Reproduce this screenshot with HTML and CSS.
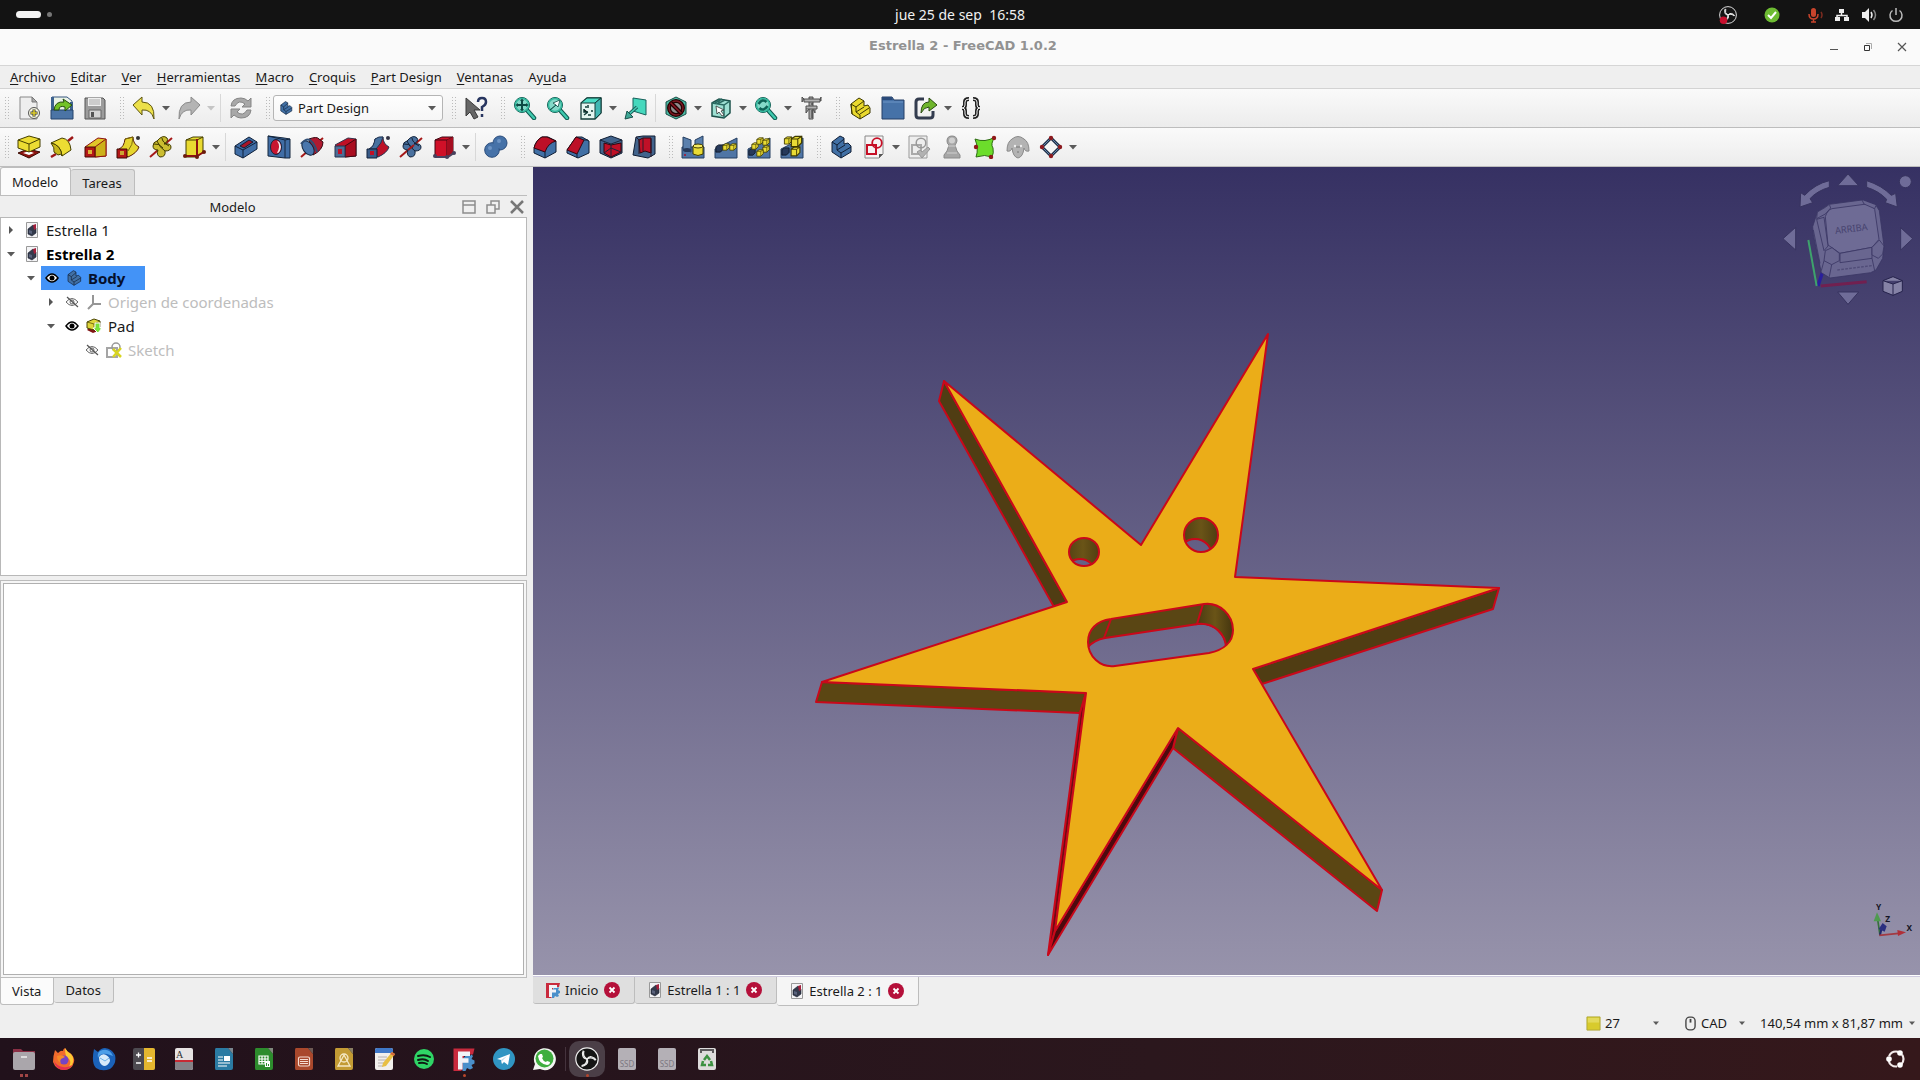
FILE: index.html
```html
<!DOCTYPE html>
<html lang="es">
<head>
    <meta charset="UTF-8">
    <meta name="viewport" content="width=device-width, initial-scale=1.0">
    <title>Estrella 2 - FreeCAD 1.0.2</title>
    <link rel="stylesheet" href="styles.css">
</head>
<body>
    <!-- Icon sprite -->
    <svg class="sprite" aria-hidden="true">
        <symbol id="arrow" viewBox="0 0 8 8"><path d="M0 2h8L4 6.500z" fill="#5a5a5a"/></symbol>
        <symbol id="tri" viewBox="0 0 8 8"><path d="M2 0v8l4-4z" fill="#555"/></symbol>

        <symbol id="new" viewBox="0 0 24 24"><path d="M3 1h12l5 5v17H3z" fill="#eee" stroke="#888"/><path d="M15 1v5h5z" fill="#aaa" stroke="#777"/><circle cx="17" cy="17" r="5.500" fill="#f4f4e0" stroke="#555"/><path d="M17 13.500v7M13.500 17h7" stroke="#333" stroke-width="3"/><path d="M17 14v6M14 17h6" stroke="#e0d030" stroke-width="1.500"/></symbol>
        <symbol id="open" viewBox="0 0 24 24"><path d="M2 1h15l5 4v14H2z" fill="#eaf2e6" stroke="#34557f"/><path d="M1 1h3v13h16V6h3v17H1z" fill="#3d628f"/><path d="M1 14h22v9H1z" fill="#4b74a5" stroke="#24426a"/><path d="M4 14q1-9 10-8l-1-3 9 6-7 6v-4q-6-2-6 3z" fill="#73c226" stroke="#254c10"/></symbol>
        <symbol id="save" viewBox="0 0 24 24"><path d="M2 2h18l2 2v19H2z" fill="#9c9c9c" stroke="#555"/><path d="M5 2h13v8H5z" fill="#eee"/><path d="M6 4h11M6 6h11M6 8h11" stroke="#aaa"/><path d="M6 14h12v8H6z" fill="#d5d5d5" stroke="#666"/><path d="M8 16h3v5H8z" fill="#555"/></symbol>
        <symbol id="undo" viewBox="0 0 24 24"><path d="M1 9l9-8v5q13 0 12 17-3-10-12-9v5z" fill="#ece04a" stroke="#5c5410" stroke-linejoin="round"/></symbol>
        <symbol id="redo" viewBox="0 0 24 24"><path d="M23 9l-9-8v5Q1 6 2 23q3-10 12-9v5z" fill="#b4b4b4" stroke="#8b8b8b" stroke-linejoin="round"/></symbol>
        <symbol id="refresh" viewBox="0 0 24 24"><path d="M2 10q1-8 10-8 4 0 7 3l3-3v9h-9l3-3q-6-5-10 2z" fill="#a8a8a8" stroke="#858585"/><path d="M22 14q-1 8-10 8-4 0-7-3l-3 3v-9h9l-3 3q6 5 10-2z" fill="#a8a8a8" stroke="#858585"/></symbol>
        <symbol id="whats" viewBox="0 0 24 24"><path d="M2 2v18l4-4 4 7 4-2-4-7h6z" fill="#666" stroke="#3a3a3a"/><path d="M14 6q0-4 4-4 4 0 4 4 0 3-4 5v4M18 18v3" fill="none" stroke="#283660" stroke-width="2.500"/></symbol>

        <symbol id="lens" viewBox="0 0 24 24"><path d="M13 13l8 9" stroke="#0d5a50" stroke-width="4.500" stroke-linecap="round"/><path d="M13 13l8 9" stroke="#3fc9ae" stroke-width="2.500" stroke-linecap="round"/><circle cx="9" cy="9" r="7.500" fill="#84d9c8" stroke="#0d5a50"/><circle cx="9" cy="9" r="6.500" fill="none" stroke="#35b89e" stroke-width="1.500"/></symbol>
        <symbol id="fitall" viewBox="0 0 24 24"><use href="#lens"/><path d="M9 4v10M4 9h10" stroke="#0e4a44" stroke-width="2"/><path d="M9 2.500l2 2.500H7zM9 15.500L7 13h4zM2.500 9L5 7v4zM15.500 9L13 11V7z" fill="#0e4a44"/></symbol>
        <symbol id="fitsel" viewBox="0 0 24 24"><use href="#lens"/><path d="M4 14l6-5-3-2 7-3-2 7-2-2z" fill="#fff" stroke="#0e4a44" stroke-width=".8"/></symbol>
        <symbol id="isocube" viewBox="0 0 24 24"><path d="M2 7l6-5h14v15l-6 6H2z" fill="#e4f5f0" stroke="#123c38" stroke-width="1.300"/><path d="M2 7l6-5h14l-6 5z" fill="#4bdcc4" stroke="#123c38"/><path d="M16 7l6-5v15l-6 6z" fill="#42b7b3" stroke="#123c38"/><path d="M5 19l4-3M9 9v3M5 13v3h4M9 19h3M12 15h2M7 10v2" stroke="#123c38" stroke-width="1.500"/></symbol>
        <symbol id="goto" viewBox="0 0 24 24"><path d="M9 2l13 2v15L9 15z" fill="#45d8bd" stroke="#17605a"/><path d="M13 11l-9 8" stroke="#17605a" stroke-width="3.500"/><path d="M13 11l-9 8" stroke="#49cdb6" stroke-width="1.500"/><path d="M1 23l2-8 6 6z" fill="#3ea795" stroke="#17504a"/></symbol>
        <symbol id="drawstyle" viewBox="0 0 24 24"><path d="M12 1l10 5v12l-10 5-10-5V6z" fill="#4bb9a3" stroke="#174c45"/><circle cx="12" cy="12" r="7" fill="#8d8d8d" stroke="#200" stroke-width="4"/><circle cx="12" cy="12" r="7" fill="none" stroke="#7d1822" stroke-width="1.500"/><path d="M7 7l10 10" stroke="#200" stroke-width="4"/><path d="M7 7l10 10" stroke="#8d1522" stroke-width="1.500"/></symbol>
        <symbol id="bbox" viewBox="0 0 24 24"><path d="M3 7l7-4 11 2v12l-6 5-12-2z" fill="#9ee0d3" stroke="#1c514b" stroke-width="1.500"/><path d="M3 7l12 2 6-4M15 9v13M10 3v4M6 7l7-4M8 8l8-4" fill="none" stroke="#2a6a62" stroke-width="1.500"/><path d="M7 10l8 4-3 1 3 4-2 1-3-4-2 2z" fill="#fff" stroke="#333" stroke-width=".8"/></symbol>
        <symbol id="sync" viewBox="0 0 24 24"><use href="#lens"/><path d="M4.500 8q4-6 8-2M13.500 10q-4 6-8 2" fill="none" stroke="#0e6356" stroke-width="2.500"/></symbol>
        <symbol id="caliper" viewBox="0 0 24 24"><path d="M10 1h4v22h-4z" fill="#a5a5a5" stroke="#4e4e4e"/><path d="M5 3h16v3H5zM7 10h11v3H7z" fill="#b3b3b3" stroke="#4e4e4e"/><path d="M5 3L3 1v5zM21 4l1-3v4zM7 13v4l3-4M16 13v4l-2-4" fill="#999" stroke="#4e4e4e"/><path d="M12 8h2M12 15h2M12 17h2M12 19h2M12 21h2" stroke="#333"/></symbol>
        <symbol id="part" viewBox="0 0 24 24"><path d="M3 8l8-6 5 3v5l4-1 2 3v5l-10 6-8-5z" fill="#e9d92e" stroke="#3c3700" stroke-linejoin="round"/><path d="M3 8l5 3v5l4 3v4M8 11l8-6M8 16l8-5M12 18l9-6M3 8l1 10" fill="none" stroke="#3c3700"/></symbol>
        <symbol id="folder" viewBox="0 0 24 24"><path d="M1 4V1h10l2 3h10v19H1z" fill="#4672a8" stroke="#243f66"/><path d="M1 1h9l2 3H1z" fill="#2b4b7a"/><path d="M2 6h20" stroke="#6d95c6"/></symbol>
        <symbol id="link" viewBox="0 0 24 24"><path d="M10 3H5q-3 0-3 3v13q0 3 3 3h11q3 0 3-3v-4" fill="none" stroke="#333c4f" stroke-width="3"/><path d="M7 17Q7 6 15 6V2l8 7-8 6v-4q-5 0-8 6z" fill="#6eb52b" stroke="#2a4d12"/></symbol>
        <symbol id="braces" viewBox="0 0 24 24"><path d="M10 3Q6 3 6 6v3q0 3-3 3 3 0 3 3v3q0 3 4 3M14 3q4 0 4 3v3q0 3 3 3-3 0-3 3v3q0 3-4 3" fill="none" stroke="#222" stroke-width="4"/><path d="M10 3Q6 3 6 6v3q0 3-3 3 3 0 3 3v3q0 3 4 3M14 3q4 0 4 3v3q0 3 3 3-3 0-3 3v3q0 3-4 3" fill="none" stroke="#eee" stroke-width="1"/></symbol>

        <symbol id="pad" viewBox="0 0 24 24"><path d="M1 18l10-4 12 3-11 6z" fill="#8e1410" stroke="#3a0a00"/><path d="M6 18l6-2 5 2-5 2z" fill="#fff"/><path d="M1 5l11-4 11 3v8l-11 5-11-4z" fill="#ecdc33" stroke="#453f00" stroke-linejoin="round"/><path d="M1 5l11 4 11-5M12 9v8" fill="none" stroke="#453f00"/></symbol>
        <symbol id="revolve" viewBox="0 0 24 24"><path d="M1 22l5-3M18 6l5-4" stroke="#9d1717" stroke-width="2.500"/><path d="M1 8l11-5q8 1 9 12l-9 6Q11 10 1 8z" fill="#ecdc33" stroke="#453f00"/><path d="M1 8q4 5 3 9l4 3q5-2 4 1Q11 10 1 8z" fill="#c7b71b" stroke="#453f00"/></symbol>
        <symbol id="loft" viewBox="0 0 24 24"><path d="M2 12L15 3l8 1v17l-11 1z" fill="#e1c529" stroke="#8d1111"/><path d="M12 12l11-8v17l-11 1z" fill="#cdb11a" stroke="#8d1111"/><path d="M2 12h10v10H2z" fill="#b31717" stroke="#480a05"/><path d="M5 15h4v4H5z" fill="#ddb23b"/></symbol>
        <symbol id="pipe" viewBox="0 0 24 24"><path d="M3 14Q8 12 9 4l8-2q0 7 6 10-2 6-11 10z" fill="#e5d52e" stroke="#591f05"/><path d="M9 4l8-2q0 8-5 14" fill="none" stroke="#7c6c0c"/><path d="M1 14h10v9H1z" fill="#b31717" stroke="#3a0a05"/><path d="M4 16h4v4H4z" fill="#cba632"/><circle cx="22" cy="3" r="2" fill="#333"/></symbol>
        <symbol id="helix" viewBox="0 0 24 24"><path d="M1 22L23 3" stroke="#a51818" stroke-width="2"/><path d="M8 6Q14-1 18 3q2 3-3 6 7-1 7 3 0 4-6 4 1 6-5 6-4-2-2-7-5 0-5-4 0-4 4-5z" fill="#cbbd30" stroke="#403a00"/><path d="M8 6q2 6 8 10M13 3q0 4 7 8M5 9q5-1 9 4" fill="none" stroke="#403a00"/></symbol>
        <symbol id="addbox" viewBox="0 0 24 24"><path d="M4 5l7-3h10v15l-6 5H4z" fill="#e9da31" stroke="#453f00"/><path d="M4 5h11l6-3M15 5v17" fill="none" stroke="#453f00"/><path d="M15 4v17M3 21h12l7-4" fill="none" stroke="#8c1111" stroke-width="2"/><circle cx="3" cy="21" r="2" fill="#6a1b0b"/><circle cx="15" cy="22" r="2" fill="#6a1b0b"/><circle cx="22" cy="17" r="2" fill="#6a1b0b"/></symbol>
        <symbol id="pocket" viewBox="0 0 24 24"><path d="M1 11L15 2l8 5v7L9 23l-8-4z" fill="#406da5" stroke="#0f2038"/><path d="M1 11l8 4 14-8M9 15v8" fill="none" stroke="#0f2038"/><path d="M6 11l9-6 4 2-9 6z" fill="#a81528" stroke="#0f2038"/></symbol>
        <symbol id="hole" viewBox="0 0 24 24"><path d="M1 1l16 2 6 1v19l-5 0-17-2z" fill="#406da5" stroke="#14263d"/><path d="M18 5v18M1 1l17 4 5-1" fill="none" stroke="#14263d"/><ellipse cx="9" cy="12" rx="5.500" ry="7.500" fill="#c81530" stroke="#14263d"/><path d="M10 6q4 5 0 12 3 0 4-6-1-6-4-6z" fill="#f0f0f0"/></symbol>
        <symbol id="groove" viewBox="0 0 24 24"><path d="M1 22L23 3" stroke="#a51818" stroke-width="2"/><path d="M9 4q8-3 10 0l4 3q0 8-10 13z" fill="#b01a30" stroke="#350812"/><ellipse cx="8" cy="13" rx="5" ry="8" transform="rotate(-35 8 13)" fill="#4a77ad" stroke="#14263d"/><path d="M1 9q5-6 9-4 5 4 7 12" fill="none" stroke="#304e74" stroke-width="2"/></symbol>
        <symbol id="subloft" viewBox="0 0 24 24"><path d="M2 10L15 3l8 1v17l-11 1z" fill="#c01026" stroke="#34314b"/><path d="M12 11l11-7v17l-11 1z" fill="#a90d20" stroke="#400810"/><path d="M2 11h10v11H2z" fill="#4d6c95" stroke="#24334e"/><path d="M5 14h4v5H5z" fill="#c01026"/></symbol>
        <symbol id="subpipe" viewBox="0 0 24 24"><path d="M3 14Q8 12 9 4l8-2q0 7 6 10-2 6-11 10z" fill="#bd1229" stroke="#233552"/><path d="M9 4q4-3 8-2-1 6-7 12L3 14Q8 12 9 4z" fill="#48719f" stroke="#233552"/><path d="M1 14h10v9H1z" fill="#385a87" stroke="#10203a"/><path d="M4 16h4v4H4z" fill="#c01026"/><circle cx="22" cy="3" r="2" fill="#334"/></symbol>
        <symbol id="subhelix" viewBox="0 0 24 24"><path d="M1 22L23 3" stroke="#a51818" stroke-width="2"/><path d="M8 6Q14-1 18 3q2 3-3 6 7-1 7 3 0 4-6 4 1 6-5 6-4-2-2-7-5 0-5-4 0-4 4-5z" fill="#4a719f" stroke="#112139"/><path d="M8 6q2 6 8 10M13 3q0 4 7 8M5 9q5-1 9 4" fill="none" stroke="#112139"/><path d="M9 15l6-5" stroke="#a51818" stroke-width="2"/></symbol>
        <symbol id="subbox" viewBox="0 0 24 24"><path d="M3 5l7-3h11v15l-6 5H3z" fill="#d01028" stroke="#3f0713"/><path d="M3 5h12l6-3M15 5v17" fill="none" stroke="#3f0713"/><path d="M15 5l6-3v15l-6 5z" fill="#a50d20"/><path d="M3 22h13l6-4" fill="none" stroke="#4c4260" stroke-width="2"/><circle cx="3" cy="21" r="2" fill="#47405b"/><circle cx="15" cy="22" r="2" fill="#47405b"/><circle cx="22" cy="18" r="2" fill="#47405b"/></symbol>
        <symbol id="bool" viewBox="0 0 24 24"><circle cx="16" cy="8" r="7" fill="#4672a8" stroke="#2b4d7c"/><circle cx="8" cy="15" r="7.300" fill="#4672a8" stroke="#2b4d7c"/><circle cx="15" cy="8" r="5.500" fill="#4672a8"/><circle cx="6" cy="13" r="2" fill="#6d94c4"/><circle cx="15" cy="6" r="2" fill="#6d94c4"/></symbol>
        <symbol id="fillet" viewBox="0 0 24 24"><path d="M1 13Q3 5 9 2h6l8 4v11l-11 6-11-5z" fill="#4170a5" stroke="#0f1d33"/><path d="M1 13Q3 5 9 2h5l9 4q-8 2-11 11z" fill="#bd1027" stroke="#35060e"/><path d="M12 17v6" stroke="#0f1d33"/></symbol>
        <symbol id="chamfer" viewBox="0 0 24 24"><path d="M1 15L10 2h6l7 4v12l-11 5-11-5z" fill="#4170a5" stroke="#0f1d33"/><path d="M1 15L10 2l8 3-7 14z" fill="#bd1027" stroke="#35060e"/><path d="M11 19v4M18 5h4" stroke="#0f1d33"/></symbol>
        <symbol id="draft" viewBox="0 0 24 24"><path d="M1 5l11-4 11 4v13l-11 5-11-5z" fill="#42648c" stroke="#0f1d33"/><path d="M5 8l7 2 10-2v9l-10 5-7-4z" fill="#c01027" stroke="#35060e"/><path d="M1 5l11 4 11-4M12 9v14M5 18l7-5 10 4" fill="none" stroke="#1b263b"/></symbol>
        <symbol id="thick" viewBox="0 0 24 24"><path d="M4 2l7-1h12v18l-7 4-15-3z" fill="#42648c" stroke="#0f1d33"/><path d="M7 5l4-2h8v15l-6-2-5 2z" fill="#c01027" stroke="#35060e"/><path d="M11 3v13M19 4v18M4 2l3 3v14" fill="none" stroke="#2a1b2b"/></symbol>

        <symbol id="slope" viewBox="0 0 24 24"><path d="M1 14L23 3v20H1z" fill="#4f75a5" stroke="#253e60"/></symbol>
        <symbol id="ycube" viewBox="0 0 10 10"><path d="M1 3l3-2h5v5L6 9H1z" fill="#e9dc35" stroke="#3f3a00"/><path d="M1 3h5l3-2M6 3v6" fill="none" stroke="#3f3a00" stroke-width=".8"/></symbol>
        <symbol id="bcube" viewBox="0 0 10 10"><path d="M1 3l3-2h5v5L6 9H1z" fill="#26395a" stroke="#0d1626"/></symbol>
        <symbol id="mirror" viewBox="0 0 24 24"><path d="M1 12h22v11H1z" fill="#4f75a5" stroke="#253e60"/><path d="M2 2l8 3v12l-8-3zM14 5l8-4v12l-8 4z" fill="#5a80ad" stroke="#253e60"/><ellipse cx="6" cy="15" rx="4" ry="2" fill="#26395a"/><path d="M12 11h10v8q-5 3-10 0z" fill="#e9dc35" stroke="#3f3a00"/><ellipse cx="17" cy="11" rx="5" ry="2" fill="#f4ea60" stroke="#3f3a00"/><circle cx="4" cy="20" r="1" fill="#b01028"/></symbol>
        <symbol id="linear" viewBox="0 0 24 24"><use href="#slope"/><use href="#bcube" x="1" y="9" width="9" height="9"/><use href="#ycube" x="8" y="8" width="8" height="8"/><use href="#ycube" x="15" y="8" width="8" height="8"/></symbol>
        <symbol id="polar" viewBox="0 0 24 24"><use href="#slope"/><use href="#bcube" x="1" y="13" width="8" height="8"/><use href="#ycube" x="4" y="7" width="8" height="8"/><use href="#ycube" x="9" y="2" width="8" height="8"/><use href="#ycube" x="15" y="3" width="8" height="8"/><use href="#ycube" x="15" y="10" width="8" height="8"/><use href="#ycube" x="9" y="14" width="8" height="8"/></symbol>
        <symbol id="multi" viewBox="0 0 24 24"><use href="#slope"/><use href="#ycube" x="3" y="1" width="10" height="9"/><use href="#ycube" x="10" y="0" width="13" height="13"/><use href="#bcube" x="1" y="12" width="9" height="9"/><use href="#ycube" x="10" y="11" width="11" height="11"/></symbol>

        <symbol id="body" viewBox="0 0 24 24"><path d="M3 7l8-6 4 2v6l4-1 3 3v6l-10 6-9-6z" fill="#4170a5" stroke="#101f36" stroke-linejoin="round"/><path d="M3 7l5 3v5l4 3v5M8 10l7-6M8 15l8-5M12 18l10-6" fill="none" stroke="#101f36"/></symbol>
        <symbol id="sketch" viewBox="0 0 24 24"><path d="M3 1h18v18l-4 4H3z" fill="#f6f4f4" stroke="#888"/><path d="M21 19l-4 4v-4z" fill="#555"/><path d="M5 10h9v9H5z" fill="none" stroke="#c60f26" stroke-width="2"/><circle cx="15" cy="8" r="4.800" fill="none" stroke="#c60f26" stroke-width="1.800"/></symbol>
        <symbol id="validate" viewBox="0 0 24 24"><path d="M2 1h18v22H2z" fill="#eee" stroke="#999"/><path d="M5 10h9v9H5z" fill="none" stroke="#aaa" stroke-width="2"/><circle cx="14" cy="8" r="4.800" fill="none" stroke="#999" stroke-width="1.500"/><path d="M10 17l3-2 2 2 6-5 2 2-8 9z" fill="#b2b2b2" stroke="#999"/></symbol>
        <symbol id="pawn" viewBox="0 0 24 24"><path d="M12 1q5 0 5 5-1 3-2 4l2 6 3 4v3H4v-3l3-4 2-6Q7 9 7 6q0-5 5-5z" fill="#a6a6a6" stroke="#8a8a8a"/><circle cx="12" cy="5.500" r="3" fill="#d0d0d0"/><path d="M8 11h8M7 18h10" stroke="#d0d0d0"/></symbol>
        <symbol id="shapebinder" viewBox="0 0 24 24"><path d="M2 4q10 4 20-2-5 7-2 11 1 5-1 9-7-3-16 0 3-8-1-18z" fill="#6cdd2b" stroke="#2d6d12"/><circle cx="21" cy="3" r="2.200" fill="#901a1a"/><circle cx="3" cy="12" r="2.200" fill="#901a1a"/><circle cx="18" cy="22" r="2.200" fill="#901a1a"/></symbol>
        <symbol id="dolly" viewBox="0 0 24 24"><path d="M6 4q6-5 12 0 5 3 5 12-4 1-5-3-1 9-6 10-5-1-6-10-1 4-5 3 0-9 5-12z" fill="#b3b3b3" stroke="#8a8a8a"/><circle cx="9" cy="11" r="1.200" fill="#eee"/><circle cx="15" cy="11" r="1.200" fill="#eee"/><path d="M10 12h4M11 17h2" stroke="#777"/></symbol>
        <symbol id="datum" viewBox="0 0 24 24"><path d="M12 3l9 9-9 9-9-9z" fill="#f5f5f5" stroke="#1e2f48" stroke-width="3"/><path d="M12 3l9 9-9 9-9-9z" fill="none" stroke="#6484ab"/><circle cx="12" cy="3" r="2.200" fill="#8c1a1f"/><circle cx="21" cy="12" r="2.200" fill="#8c1a1f"/><circle cx="12" cy="21" r="2.200" fill="#8c1a1f"/><circle cx="3" cy="12" r="2.200" fill="#8c1a1f"/></symbol>

        <symbol id="dock" viewBox="0 0 16 16"><path d="M2 2h12v12H2zM2 6h12" fill="none" stroke="#8d8d8d" stroke-width="1.500"/></symbol>
        <symbol id="float" viewBox="0 0 16 16"><path d="M2 6h8v8H2zM6 6V2h8v8h-4" fill="none" stroke="#8d8d8d" stroke-width="1.500"/></symbol>
        <symbol id="close" viewBox="0 0 16 16"><path d="M2 2l12 12M14 2L2 14" stroke="#777" stroke-width="2.500"/></symbol>

        <symbol id="doc" viewBox="0 0 16 16"><path d="M2.500.5h11v15h-11z" fill="#f4f4f6" stroke="#999"/><path d="M4 7l5-4 3 3v5l-4 3-4-2z" fill="#333a4c" stroke="#1d2230" stroke-width=".6"/><path d="M9 3l3-1v5l-2 1z" fill="#a3203c"/><path d="M5 8l3 1v3l-3-1z" fill="#59627c"/></symbol>
        <symbol id="eye" viewBox="0 0 16 16"><path d="M2 8q6-8 12 0-6 8-12 0z" fill="#fff" stroke="#000" stroke-width="1.500"/><circle cx="8" cy="8" r="2.500" fill="#000"/></symbol>
        <symbol id="eyeoff" viewBox="0 0 16 16"><path d="M2 8q6-7 12 0-6 7-12 0z" fill="#fff" stroke="#666"/><circle cx="8" cy="8" r="2" fill="none" stroke="#666"/><path d="M3 3l11 10" stroke="#555" stroke-width="1.200"/></symbol>
        <symbol id="origin" viewBox="0 0 16 16"><path d="M7 1v9L2 15M7 10h8" fill="none" stroke="#969696" stroke-width="2"/></symbol>
        <symbol id="padtip" viewBox="0 0 16 16"><path d="M1 12l6 3 5-2v-2H2z" fill="#801616"/><path d="M1 4l7-3 6 2v6l-6 3-7-2z" fill="#dfd63a" stroke="#4a4504"/><path d="M1 4l7 2 6-3M8 6v6" fill="none" stroke="#4a4504" stroke-width=".7"/><path d="M9 5h5v5h2l-4 5-5-5h2z" fill="#7ae03a" stroke="#fff"/></symbol>
        <symbol id="sketchedit" viewBox="0 0 16 16"><path d="M1 6h10v9H1z" fill="none" stroke="#a5a5a5" stroke-width="2"/><circle cx="10" cy="5" r="4" fill="none" stroke="#999" stroke-width="1.500"/><path d="M7 7l8 8M15 6l-8 9" stroke="#d8d520" stroke-width="2.500"/></symbol>
        <symbol id="fclogo" viewBox="0 0 16 16"><path d="M1 1h14l-1 4H8v9l-2 2H1z" fill="#c92a3d"/><path d="M9 6h3l1-1 1 1-1 2 2 1v2l-2 1 1 2-2 1-2-1-1 2H7V8z" fill="#4a8fca"/><path d="M4 3h8v3H7v1.500h4v3H7V15H4z" fill="#f2f2f6"/></symbol>
        <symbol id="x" viewBox="0 0 16 16"><circle cx="8" cy="8" r="8" fill="#b5103a"/><path d="M5.500 5.500l5 5M10.500 5.500l-5 5" stroke="#fff" stroke-width="1.800"/></symbol>
        <symbol id="obs" viewBox="0 0 24 24"><circle cx="12" cy="12" r="11.200" fill="#151515" stroke="#eee" stroke-width="1.200"/><g fill="none" stroke="#eee" stroke-width="1.300"><path d="M12 12q-5-3-3-8M12 12q2-3 5-2 3 1 4 3"/><path d="M12 12q-5-3-3-8M12 12q2-3 5-2 3 1 4 3" transform="rotate(120 12 12)"/><path d="M12 12q-5-3-3-8M12 12q2-3 5-2 3 1 4 3" transform="rotate(240 12 12)"/></g></symbol>
    </svg>

    <header class="topbar">
        <div class="workspaces"><span class="pill"></span><span class="dot"></span></div>
        <time class="clock">jue 25 de sep&nbsp; 16:58</time>
        <div class="tray">
            <svg width="18" height="18" viewBox="0 0 24 24"><use href="#obs"/><circle cx="6" cy="19" r="5" fill="#c8102e"/></svg>
            <svg class="tray-check" width="16" height="16" viewBox="0 0 16 16"><circle cx="8" cy="8" r="7.500" fill="#6dbb32"/><path d="M4 8l3 3 5-6" fill="none" stroke="#fff" stroke-width="2"/></svg>
            <svg width="16" height="16" viewBox="0 0 16 16"><rect x="4" y="1" width="5" height="9" rx="2.500" fill="#c8442c"/><path d="M2 7q0 5 4.500 5T11 7M6.500 12v3M4 15h5" fill="none" stroke="#c8442c" stroke-width="1.500"/><path d="M14 5q2 3 0 6" fill="none" stroke="#7d2c20" stroke-width="1.500"/></svg>
            <svg width="16" height="16" viewBox="0 0 16 16"><path d="M5 2h5v4H5zM1 10h5v4H1zM10 10h5v4h-5z" fill="#eee"/><path d="M7.500 6v2.500M3 10V8.500h10V10" fill="none" stroke="#eee" stroke-width="1.500"/></svg>
            <svg width="16" height="16" viewBox="0 0 16 16"><path d="M1 5h3l4-4v14l-4-4H1z" fill="#eee"/><path d="M10 5q2 3 0 6" fill="none" stroke="#eee" stroke-width="1.500"/><path d="M12.500 3q4 5 0 10" fill="none" stroke="#888" stroke-width="1.500"/></svg>
            <svg width="16" height="16" viewBox="0 0 16 16"><path d="M4.500 3.500a6 6 0 1 0 7 0M8 1v7" fill="none" stroke="#bbb" stroke-width="1.500"/></svg>
        </div>
    </header>

    <div class="titlebar">
        <h1>Estrella 2 - FreeCAD 1.0.2</h1>
        <div class="win-buttons">
            <button aria-label="Minimizar"><svg width="10" height="10" viewBox="0 0 10 10"><path d="M1 7.500h8" stroke="#555"/></svg></button>
            <button aria-label="Restaurar"><svg width="10" height="10" viewBox="0 0 10 10"><path d="M1.500 3.500h5v5h-5z" fill="none" stroke="#333"/><path d="M3 1.500h5.500V7" fill="none" stroke="#aaa"/></svg></button>
            <button aria-label="Cerrar"><svg width="10" height="10" viewBox="0 0 10 10"><path d="M1 1l8 8M9 1L1 9" stroke="#555" stroke-width="1.200"/></svg></button>
        </div>
    </div>

    <nav class="menubar">
        <a href="#"><u>A</u>rchivo</a>
        <a href="#"><u>E</u>ditar</a>
        <a href="#"><u>V</u>er</a>
        <a href="#"><u>H</u>erramientas</a>
        <a href="#"><u>M</u>acro</a>
        <a href="#"><u>C</u>roquis</a>
        <a href="#"><u>P</u>art Design</a>
        <a href="#"><u>V</u>entanas</a>
        <a href="#">Ay<u>u</u>da</a>
    </nav>

    <div class="toolbar">
        <span class="handle"></span>
        <button aria-label="Nuevo"><svg><use href="#new"/></svg></button>
        <button aria-label="Abrir"><svg><use href="#open"/></svg></button>
        <button aria-label="Guardar"><svg><use href="#save"/></svg></button>
        <span class="handle"></span>
        <button aria-label="Deshacer"><svg><use href="#undo"/></svg></button>
        <button class="drop" aria-label="Historial"><svg><use href="#arrow"/></svg></button>
        <button aria-label="Rehacer"><svg><use href="#redo"/></svg></button>
        <button class="drop off" aria-label="Historial"><svg><use href="#arrow"/></svg></button>
        <span class="sep"></span>
        <button aria-label="Refrescar"><svg><use href="#refresh"/></svg></button>
        <span class="handle"></span>
        <label class="workbench">
            <svg class="wb-icon"><use href="#body"/></svg>
            <select aria-label="Banco de trabajo"><option>Part Design</option></select>
            <svg class="wb-arrow"><use href="#arrow"/></svg>
        </label>
        <span class="handle"></span>
        <button aria-label="Ayuda"><svg><use href="#whats"/></svg></button>
        <span class="handle"></span>
        <button aria-label="Ajustar todo"><svg><use href="#fitall"/></svg></button>
        <button aria-label="Ajustar a la selección"><svg><use href="#fitsel"/></svg></button>
        <button aria-label="Vista"><svg><use href="#isocube"/></svg></button>
        <button class="drop" aria-label="Vistas"><svg><use href="#arrow"/></svg></button>
        <button aria-label="Ir a la selección"><svg><use href="#goto"/></svg></button>
        <span class="sep"></span>
        <button aria-label="Estilo de dibujo"><svg><use href="#drawstyle"/></svg></button>
        <button class="drop" aria-label="Estilos"><svg><use href="#arrow"/></svg></button>
        <button aria-label="Selección"><svg><use href="#bbox"/></svg></button>
        <button class="drop" aria-label="Opciones de selección"><svg><use href="#arrow"/></svg></button>
        <button aria-label="Sincronizar vista"><svg><use href="#sync"/></svg></button>
        <button class="drop" aria-label="Opciones de vista"><svg><use href="#arrow"/></svg></button>
        <button aria-label="Medir"><svg><use href="#caliper"/></svg></button>
        <span class="handle"></span>
        <button aria-label="Crear pieza"><svg><use href="#part"/></svg></button>
        <button aria-label="Crear grupo"><svg><use href="#folder"/></svg></button>
        <button aria-label="Crear enlace"><svg><use href="#link"/></svg></button>
        <button class="drop" aria-label="Enlaces"><svg><use href="#arrow"/></svg></button>
        <button aria-label="Variables"><svg><use href="#braces"/></svg></button>
    </div>

    <div class="toolbar">
        <span class="handle"></span>
        <button aria-label="Extruir"><svg><use href="#pad"/></svg></button>
        <button aria-label="Revolución"><svg><use href="#revolve"/></svg></button>
        <button aria-label="Puente aditivo"><svg><use href="#loft"/></svg></button>
        <button aria-label="Tubo aditivo"><svg><use href="#pipe"/></svg></button>
        <button aria-label="Hélice aditiva"><svg><use href="#helix"/></svg></button>
        <button aria-label="Primitiva aditiva"><svg><use href="#addbox"/></svg></button>
        <button class="drop" aria-label="Primitivas aditivas"><svg><use href="#arrow"/></svg></button>
        <span class="sep"></span>
        <button aria-label="Vaciado"><svg><use href="#pocket"/></svg></button>
        <button aria-label="Agujero"><svg><use href="#hole"/></svg></button>
        <button aria-label="Ranura"><svg><use href="#groove"/></svg></button>
        <button aria-label="Puente sustractivo"><svg><use href="#subloft"/></svg></button>
        <button aria-label="Tubo sustractivo"><svg><use href="#subpipe"/></svg></button>
        <button aria-label="Hélice sustractiva"><svg><use href="#subhelix"/></svg></button>
        <button aria-label="Primitiva sustractiva"><svg><use href="#subbox"/></svg></button>
        <button class="drop" aria-label="Primitivas sustractivas"><svg><use href="#arrow"/></svg></button>
        <span class="sep"></span>
        <button aria-label="Operación booleana"><svg><use href="#bool"/></svg></button>
        <span class="handle"></span>
        <button aria-label="Redondeo"><svg><use href="#fillet"/></svg></button>
        <button aria-label="Chaflán"><svg><use href="#chamfer"/></svg></button>
        <button aria-label="Ángulo de salida"><svg><use href="#draft"/></svg></button>
        <button aria-label="Espesor"><svg><use href="#thick"/></svg></button>
        <span class="handle"></span>
        <button aria-label="Simetría"><svg><use href="#mirror"/></svg></button>
        <button aria-label="Patrón lineal"><svg><use href="#linear"/></svg></button>
        <button aria-label="Patrón polar"><svg><use href="#polar"/></svg></button>
        <button aria-label="Transformación múltiple"><svg><use href="#multi"/></svg></button>
        <span class="handle"></span>
        <button aria-label="Crear cuerpo"><svg><use href="#body"/></svg></button>
        <button aria-label="Crear croquis"><svg><use href="#sketch"/></svg></button>
        <button class="drop" aria-label="Croquis"><svg><use href="#arrow"/></svg></button>
        <button aria-label="Validar croquis"><svg><use href="#validate"/></svg></button>
        <button aria-label="Comprobar geometría"><svg><use href="#pawn"/></svg></button>
        <button aria-label="Vinculador de forma"><svg><use href="#shapebinder"/></svg></button>
        <button aria-label="Clonar"><svg><use href="#dolly"/></svg></button>
        <button aria-label="Plano de referencia"><svg><use href="#datum"/></svg></button>
        <button class="drop" aria-label="Referencias"><svg><use href="#arrow"/></svg></button>
    </div>

    <main class="main">
        <aside class="side">
            <div class="tabs top-tabs">
                <button class="active">Modelo</button>
                <button>Tareas</button>
            </div>
            <div class="panel-title">
                <h2>Modelo</h2>
                <button aria-label="Acoplar"><svg><use href="#dock"/></svg></button>
                <button aria-label="Flotar"><svg><use href="#float"/></svg></button>
                <button aria-label="Cerrar"><svg><use href="#close"/></svg></button>
            </div>
            <ul class="tree">
                <li><div class="row"><svg class="exp"><use href="#tri"/></svg><span class="item"><svg><use href="#doc"/></svg>Estrella 1</span></div></li>
                <li><div class="row"><svg class="exp"><use href="#arrow"/></svg><span class="item bold"><svg><use href="#doc"/></svg>Estrella 2</span></div>
                    <ul>
                        <li><div class="row"><svg class="exp"><use href="#arrow"/></svg><span class="item bold selected"><svg><use href="#eye"/></svg><svg><use href="#body"/></svg>Body</span></div>
                            <ul>
                                <li><div class="row"><svg class="exp"><use href="#tri"/></svg><span class="item hidden"><svg><use href="#eyeoff"/></svg><svg><use href="#origin"/></svg>Origen de coordenadas</span></div></li>
                                <li><div class="row"><svg class="exp"><use href="#arrow"/></svg><span class="item"><svg><use href="#eye"/></svg><svg><use href="#padtip"/></svg>Pad</span></div>
                                    <ul>
                                        <li><div class="row"><span class="exp"></span><span class="item hidden"><svg><use href="#eyeoff"/></svg><svg><use href="#sketchedit"/></svg>Sketch</span></div></li>
                                    </ul>
                                </li>
                            </ul>
                        </li>
                    </ul>
                </li>
            </ul>
            <div class="properties"><div class="property-list"></div></div>
            <div class="tabs bottom-tabs">
                <button class="active">Vista</button>
                <button>Datos</button>
            </div>
        </aside>

        <section class="workspace">
            <div class="view3d">
                <svg class="model" viewBox="533 167 1387 808">
                    <defs>
                        <clipPath id="eyes"><ellipse cx="1084" cy="552" rx="15" ry="14"/><ellipse cx="1201" cy="535" rx="17" ry="17"/></clipPath>
                        <clipPath id="mouth"><path d="M1111 619L1204 604C1220 602 1233 615 1233 630C1233 642 1224 650 1209 653L1115 666C1100 668 1088 656 1088 642C1088 630 1096 621 1111 619Z"/></clipPath>
                        <linearGradient id="wall"><stop offset="0" stop-color="#4a3a12"/><stop offset=".5" stop-color="#6a5417"/><stop offset="1" stop-color="#44350f"/></linearGradient>
                    </defs>
                    <!-- side faces -->
                    <g stroke="#c9081a" stroke-width="2" stroke-linejoin="round">
                        <path d="M944 381L939 401L1054 607L1067 602Z" fill="#503d13"/>
                        <path d="M822 682L816 702L1080 713L1086 693Z" fill="#5b4613"/>
                        <path d="M1499 588L1493 609L1262 684L1253 669Z" fill="#503d13"/>
                        <path d="M1382 890L1377 911L1173 748L1178 728Z" fill="#5b4613"/>
                        <path d="M1086 693L1080 713L1048 955L1055 931Z" fill="#6d0b14"/>
                        <path d="M1178 728L1173 748L1048 955L1055 931Z" fill="#4c0a0e"/>
                    </g>
                    <!-- hole walls -->
                    <g clip-path="url(#eyes)" stroke="#c9081a" stroke-width="2" fill-rule="evenodd">
                        <path d="M1060 530h46v50h-46zM1065 573a15 14 0 1 0 30 0a15 14 0 1 0 -30 0z" fill="url(#wall)"/>
                        <path d="M1178 512h46v50h-46zM1178 556a17 17 0 1 0 34 0a17 17 0 1 0 -34 0z" fill="url(#wall)"/>
                    </g>
                    <g clip-path="url(#mouth)" stroke="#c9081a" stroke-width="2" fill-rule="evenodd">
                        <path d="M1070 590h180v90h-180zM1105 638L1198 624C1214 622 1227 635 1227 651C1227 663 1218 671 1203 674L1109 687C1094 689 1082 677 1082 663C1082 651 1090 641 1105 638Z" fill="#5a4614"/>
                        <path d="M1203 604C1220 602 1233 615 1233 630C1233 640 1231 644 1226 648C1226 634 1214 622 1197 624Z" fill="url(#wall)"/>
                        <path d="M1111 619L1104 638"/>
                    </g>
                    <!-- top face -->
                    <path fill="#ebad18" fill-rule="evenodd" stroke="#c9081a" stroke-width="2" stroke-linejoin="round" d="M1268 334L1235 577L1499 588L1253 669L1382 890L1178 728L1055 931L1086 693L822 682L1067 602L944 381L1141 545Z
                        M1069 552a15 14 0 1 0 30 0a15 14 0 1 0 -30 0z
                        M1184 535a17 17 0 1 0 34 0a17 17 0 1 0 -34 0z
                        M1111 619L1204 604C1220 602 1233 615 1233 630C1233 642 1224 650 1209 653L1115 666C1100 668 1088 656 1088 642C1088 630 1096 621 1111 619Z"/>
                </svg>

                <svg class="navcube" viewBox="240 501 420 420">
                    <g fill="#6f6c98" stroke="#37335f" stroke-width="3">
                        <path d="M413 557L444 522L476 557ZM413 876H476L444 913ZM287 682V750L249 716ZM602 683V750L638 716Z"/>
                        <circle cx="616" cy="545" r="18"/>
                        <path d="M388 542L388 562Q352 572 330 596L338 608L300 621L302 578L314 586Q345 552 388 542Z"/>
                        <path d="M500 542Q545 556 574 586L587 580L592 621L556 608L560 598Q535 572 500 562Z"/>
                        <path d="M549 842L579 830L607 842V874L579 886L549 874ZM549 842L579 852L607 842M579 852V886" fill="#8582a6" stroke="#26234c"/>
                    </g>
                    <path d="M368 815L354 858" stroke="#2a1f9c" stroke-width="10"/>
                    <path d="M362 858L500 845" stroke="#712050" stroke-width="9"/>
                    <path d="M325 720L350 858" stroke="#3ea36c" stroke-width="6"/>
                    <g fill="#696690" stroke="#3a3664" stroke-width="2.500" stroke-linejoin="round">
                        <path d="M388 613L486 600L528 616L538 632L552 738L548 775L528 810L512 818L390 834L364 818L340 705L338 680L352 636Z"/>
                        <path d="M396 626L500 612Q518 614 524 628L537 718L516 742L420 760L396 743L384 735L376 650Q382 630 396 626Z" fill="#6e6b95"/>
                        <path d="M350 658L372 652L384 738L372 752ZM352 636L376 622L388 613L392 624L376 642L350 656ZM420 760L516 742V775L420 788ZM486 600L492 612L524 626L528 616M340 690L360 790"/>
                        <path d="M376 752L396 743L418 760V782L395 794L372 782ZM516 742L538 720L552 738L548 762L535 775L516 765ZM372 782L364 812M395 794L388 830M516 775L524 812"/>
                    </g>
                    <text x="455" y="696" transform="rotate(-7 455 696)" text-anchor="middle" font-size="28" fill="#47436f">ARRIBA</text>
                    <path d="M412 810L516 797" stroke="#504c78" stroke-width="4" stroke-dasharray="8 4"/>
                </svg>

                <svg class="axes" viewBox="0 0 240 240">
                    <path d="M120 163L113 115" stroke="#36703c" stroke-width="5"/><path d="M111 94L101 121H123Z" fill="#4f9b4f"/>
                    <path d="M120 163L124 145" stroke="#22286e" stroke-width="6"/><path d="M128 126L116 144L134 152L140 136Z" fill="#2a2f80"/>
                    <path d="M118 163L176 157" stroke="#a33a42" stroke-width="5"/><path d="M198 154L172 147L174 165Z" fill="#b02f38"/>
                    <g font-size="25" font-weight="bold" text-anchor="middle" fill="#151525"><text x="116" y="87">Y</text><text x="143" y="124">Z</text><text x="208" y="149">X</text></g>
                </svg>
            </div>
            <div class="doc-tabs">
                <div class="doc-tab"><svg><use href="#fclogo"/></svg><a href="#">Inicio</a><button aria-label="Cerrar Inicio"><svg><use href="#x"/></svg></button></div>
                <div class="doc-tab"><svg><use href="#doc"/></svg><a href="#">Estrella 1 : 1</a><button aria-label="Cerrar Estrella 1"><svg><use href="#x"/></svg></button></div>
                <div class="doc-tab active"><svg><use href="#doc"/></svg><a href="#">Estrella 2 : 1</a><button aria-label="Cerrar Estrella 2"><svg><use href="#x"/></svg></button></div>
            </div>
        </section>
    </main>

    <footer class="statusbar">
        <button class="notify"><svg class="note" viewBox="0 0 16 16"><path d="M1 1h14v14H1z" fill="#d8cb2c" stroke="#b0a838"/><path d="M2 2h12v5H2z" fill="#e3da5c"/></svg><span>27</span><svg class="caret"><use href="#arrow"/></svg></button>
        <button class="navstyle"><svg class="mouse" viewBox="0 0 12 16"><rect x="1" y="1" width="10" height="14" rx="4" fill="none" stroke="#444" stroke-width="1.500"/><path d="M6 3v4" stroke="#444" stroke-width="2"/></svg><span>CAD</span><svg class="caret"><use href="#arrow"/></svg></button>
        <button class="units"><span>140,54 mm x 81,87 mm</span><svg class="caret"><use href="#arrow"/></svg></button>
    </footer>

    <nav class="dock">
        <a href="#" class="run2" aria-label="Archivos"><svg viewBox="0 0 24 24"><path d="M1 2h8l2 2h12v8H1z" fill="#8a2f45"/><rect x="1" y="5" width="22" height="18" rx="2" fill="#aaa6ab"/><path d="M9 10h6" stroke="#eee" stroke-width="1.500"/></svg></a>
        <a href="#" aria-label="Firefox"><svg viewBox="0 0 24 24"><path d="M3 3l3 3q3-3 5-2 0-2 2-3 2 4 5 5 5 4 4 9-2 8-10 8T1 15q0-6 2-12z" fill="#f26b2c"/><path d="M13 1q2 4 6 6 4 5 1 11l-3 2q3-6-1-9-3-1-3-10z" fill="#fcc934"/><path d="M2 13q1 9 9 10 6 0 9-5-4 3-9 2-7-1-9-7z" fill="#e6304f"/><circle cx="12" cy="13" r="4.500" fill="#7543c5"/><path d="M5 9q5-2 8 1l-4 2q-2 3 1 4-5-1-5-7z" fill="#f68b28"/></svg></a>
        <a href="#" aria-label="Thunderbird"><svg viewBox="0 0 24 24"><path d="M2 2l4 3q3-4 7-4 7 1 10 7 2 9-5 14-8 3-14-1-5-5-2-19z" fill="#1b62b8"/><path d="M8 4q9-4 13 5l-6-2q-7-1-9 4-1-5 2-7z" fill="#4d9fe8"/><path d="M7 10q3-4 7-2 4 2 4 6-2 5-6 5-5-1-5-9z" fill="#d8ebfa"/><path d="M8 11l5 3 4-3" fill="none" stroke="#6fb2e8"/></svg></a>
        <a href="#" aria-label="Calculadora"><svg viewBox="0 0 24 24"><rect x="1" y="1" width="22" height="22" rx="2" fill="#4d4a50"/><path d="M12 1h9q2 0 2 2v18q0 2-2 2h-9z" fill="#e5b72f"/><path d="M4 8h5M6.500 5.500v5M4 16h5M15 11h5M15 14h5" stroke="#fff" stroke-width="1.300"/></svg></a>
        <a href="#" aria-label="Diccionario"><svg viewBox="0 0 24 24"><rect x="3" y="1" width="18" height="22" rx="2" fill="#e7e3e3"/><path d="M3 15h18v6q0 2-2 2H5q-2 0-2-2z" fill="#858287"/><path d="M3 13h18v2H3z" fill="#c72a33"/><text x="4" y="11" font-family="Liberation Serif" font-size="10" fill="#333">A</text></svg></a>
        <a href="#" aria-label="Writer"><svg viewBox="0 0 24 24"><path d="M4 1h12l5 6v14q0 2-2 2H4q-1 0-1-2V3q0-2 1-2z" fill="#2b7ba3"/><path d="M16 1h5v6z" fill="#7a8790"/><path d="M6 10h5M6 13h5M6 16h12M6 19h9" stroke="#fff" stroke-width="1.200"/><path d="M12 9h6v5h-6z" fill="#fff"/></svg></a>
        <a href="#" aria-label="Calc"><svg viewBox="0 0 24 24"><path d="M4 1h12l5 6v14q0 2-2 2H4q-1 0-1-2V3q0-2 1-2z" fill="#2d8c2d"/><path d="M16 1h5v6z" fill="#7f8a7c"/><path d="M7 9h9v8H7zM7 12h9M7 14.500h9M10 9v8M13 9v8" fill="none" stroke="#fff" stroke-width="1.200"/><path d="M13 14h5v6h-5z" fill="#fff"/><path d="M14.500 19v-3M16.500 19v-2" stroke="#2d8c2d"/></svg></a>
        <a href="#" aria-label="Impress"><svg viewBox="0 0 24 24"><path d="M4 1h12l5 6v14q0 2-2 2H4q-1 0-1-2V3q0-2 1-2z" fill="#a9482c"/><path d="M16 1h5v6z" fill="#6e5a54"/><rect x="6.500" y="10" width="11" height="9" rx="1.500" fill="none" stroke="#f6dcd2" stroke-width="1.200"/><path d="M8 12.500h8M8 14.500h8M8 16.500h8" stroke="#f6dcd2"/></svg></a>
        <a href="#" aria-label="Draw"><svg viewBox="0 0 24 24"><path d="M4 1h12l5 6v14q0 2-2 2H4q-1 0-1-2V3q0-2 1-2z" fill="#c39b34"/><path d="M16 1h5v6z" fill="#8b8062"/><path d="M6 19h12L12 8z" fill="none" stroke="#f6e9c4" stroke-width="1.300"/><circle cx="12" cy="11" r="4" fill="none" stroke="#f6e9c4" stroke-width="1.300"/></svg></a>
        <a href="#" aria-label="Editor de texto"><svg viewBox="0 0 24 24"><rect x="3" y="1" width="18" height="22" rx="2" fill="#f1efec"/><path d="M3 6V3q0-2 2-2h14q2 0 2 2v3z" fill="#3f78c8"/><path d="M6 10h9M6 13h8M6 16h6M6 19h5" stroke="#b5b0b0"/><path d="M20 5l3 2-9 12-4 1 1-4z" fill="#e8bf42"/><path d="M20 5l3 2-1 2-4-2z" fill="#d5683c"/></svg></a>
        <a href="#" aria-label="Spotify"><svg viewBox="0 0 24 24"><circle cx="12" cy="12" r="10" fill="#2fd566"/><path d="M6 9q7-2 12 1M6 13q6-2 10 1M7 16q5-1 8 1" fill="none" stroke="#0e1c13" stroke-width="2" stroke-linecap="round"/></svg></a>
        <a href="#" class="run" aria-label="FreeCAD"><svg><use href="#fclogo"/></svg></a>
        <a href="#" aria-label="Telegram"><svg viewBox="0 0 24 24"><circle cx="12" cy="12" r="11" fill="#3095c2"/><path d="M5 12l13-5-2 11-4-3-2 2-1-4z" fill="#fff"/><path d="M9 13l6-4-5 5v3z" fill="#bcd9e8"/></svg></a>
        <a href="#" aria-label="WhatsApp"><svg viewBox="0 0 24 24"><path d="M1 23l2-6A11 11 0 1 1 8 22z" fill="#f2f5f2"/><circle cx="12.500" cy="11.500" r="9" fill="#3fae3f"/><path d="M8 7l2 0 1 3-1 1q1 3 4 4l1-1 3 1q0 3-3 3-8-1-9-9z" fill="#fff"/></svg></a>
        <span class="dock-sep"></span>
        <a href="#" class="run focused" aria-label="OBS Studio"><svg><use href="#obs"/></svg></a>
        <a href="#" aria-label="Disco SSD"><svg viewBox="0 0 24 24"><rect x="3" y="1" width="18" height="22" rx="2" fill="#b4b0b6"/><text x="12" y="20" text-anchor="middle" font-size="8" fill="#7d7982">SSD</text></svg></a>
        <a href="#" aria-label="Disco SSD"><svg viewBox="0 0 24 24"><rect x="3" y="1" width="18" height="22" rx="2" fill="#b4b0b6"/><text x="12" y="20" text-anchor="middle" font-size="8" fill="#7d7982">SSD</text></svg></a>
        <a href="#" aria-label="Papelera"><svg viewBox="0 0 24 24"><rect x="3" y="1" width="18" height="22" rx="2" fill="#dedcdc"/><path d="M5 2h14v4h-2V4H7v2H5z" fill="#5c5a5c"/><path d="M9 13l3-4 3 4M16 14l1 4h-4M11 18H7l1-4" fill="none" stroke="#3d9142" stroke-width="2.500"/></svg></a>
        <a href="#" class="apps" aria-label="Mostrar aplicaciones"><svg viewBox="0 0 24 24"><circle cx="12" cy="12" r="7.500" fill="none" stroke="#f2eaea" stroke-width="2.200" stroke-dasharray="11 4.700" stroke-dashoffset="5"/><circle cx="5" cy="12" r="2.800" fill="#fff"/><circle cx="16" cy="6" r="2.800" fill="#fff"/><circle cx="16" cy="18" r="2.800" fill="#fff"/></svg></a>
    </nav>
</body>
</html>
```

FILE: styles.css
```css
* {
    box-sizing: border-box;
}
body {
    display: flex;
    flex-direction: column;
    height: 100vh;
    margin: 0;
    font-family: 'Noto Sans', sans-serif;
    font-size: 13px;
    color: #1a1a1a;
    background-color: #efefef;
    overflow: hidden;
}
button {
    display: flex;
    align-items: center;
    justify-content: center;
    padding: 0;
    border: none;
    background: none;
    font: inherit;
    color: inherit;
}
a {
    color: inherit;
    text-decoration: none;
}
h1, h2 {
    margin: 0;
    font-size: 13px;
}
svg {
    display: block;
    flex: none;
}
.sprite {
    position: absolute;
    width: 0;
    height: 0;
}

/* Desktop top bar */
.topbar {
    display: grid;
    grid-template-columns: 1fr auto 1fr;
    align-items: center;
    height: 29px;
    padding: 0 16px;
    background-color: #131313;
    color: #f0f0f0;
    font-size: 14px;
}
.clock {
    line-height: 18px;
}
.workspaces {
    display: flex;
    align-items: center;
    gap: 6px;
}
.pill {
    width: 25px;
    height: 7px;
    border-radius: 4px;
    background-color: #f2f2f2;
}
.dot {
    width: 5px;
    height: 5px;
    border-radius: 50%;
    background-color: #777;
}
.tray {
    display: flex;
    align-items: center;
    justify-content: flex-end;
    gap: 11px;
}
.tray-check {
    margin: 0 16px;
}

/* Window title */
.titlebar {
    display: grid;
    grid-template-columns: 1fr auto 1fr;
    align-items: center;
    height: 37px;
    border-bottom: 1px solid #d5d5d5;
    background-color: #fafafa;
}
.titlebar h1 {
    grid-column: 2;
    padding: 0 0 3px 6px;
    font-family: 'DejaVu Sans', sans-serif;
    color: #929292;
}
.win-buttons {
    display: flex;
    justify-content: flex-end;
    padding-right: 1px;
}
.win-buttons button {
    width: 34px;
    height: 34px;
}

.menubar {
    display: flex;
    align-items: center;
    height: 23px;
    padding-left: 3px;
    border-bottom: 1px solid #d3d3d3;
}
.menubar a {
    padding: 0 8px 0 7px;
}
.menubar u {
    text-underline-offset: 2px;
}

/* Toolbars */
.toolbar {
    display: flex;
    align-items: center;
    height: 39px;
    border-bottom: 1px solid #bdbdbd;
    background: linear-gradient(#fafafa, #ececec);
}
.toolbar button {
    width: 33px;
    height: 32px;
}
.toolbar button svg {
    width: 24px;
    height: 24px;
}
.toolbar .drop {
    width: 12px;
}
.toolbar .drop svg {
    width: 8px;
    height: 8px;
}
.toolbar .off {
    opacity: 0.3;
}
.handle {
    width: 5px;
    height: 24px;
    margin: 0 3px 0 8px;
    background-image: radial-gradient(circle, #bbb 1px, transparent 1px);
    background-size: 3px 3px;
}
.handle:first-child {
    margin-left: 4px;
}
.sep {
    width: 1px;
    height: 28px;
    margin: 0 3px;
    background-color: #d8d8d8;
}
.workbench {
    position: relative;
    width: 170px;
}
.workbench select {
    display: block;
    width: 100%;
    height: 26px;
    padding: 0 24px;
    border: 1px solid #b5b5b5;
    border-radius: 3px;
    background: linear-gradient(#fefefe, #f6f6f6);
    font: inherit;
    color: inherit;
    appearance: none;
}
.wb-icon {
    position: absolute;
    top: 6px;
    left: 6px;
    width: 14px;
    height: 14px;
}
.wb-arrow {
    position: absolute;
    top: 9px;
    right: 7px;
    width: 8px;
    height: 8px;
}

/* Model panel */
.main {
    display: flex;
    flex: 1;
    min-height: 0;
}
.side {
    display: flex;
    flex-direction: column;
    flex: 0 0 533px;
    padding-right: 6px;
}
.tabs {
    display: flex;
}
.tabs button {
    padding: 0 12px 0 11px;
    border: 1px solid #bdbdbd;
    background-color: #dedede;
}
.tabs .active {
    background-color: #fbfbfb;
}
.top-tabs {
    align-items: flex-end;
    height: 29px;
    border-bottom: 1px solid #bdbdbd;
}
.top-tabs button {
    height: 26px;
    border-width: 1px 1px 0 0;
    border-radius: 3px 3px 0 0;
}
.top-tabs .active {
    height: 28px;
    border-left-width: 1px;
}
.bottom-tabs {
    align-items: flex-start;
    height: 30px;
}
.bottom-tabs button {
    height: 25px;
    border-width: 0 1px 1px 0;
    border-radius: 0 0 3px 3px;
    background-color: #e6e6e6;
}
.bottom-tabs .active {
    height: 27px;
    border-left-width: 1px;
    background-color: #fbfbfb;
}
.panel-title {
    display: flex;
    align-items: center;
    gap: 8px;
    height: 21px;
    padding-right: 2px;
}
.panel-title h2 {
    flex: 1;
    padding-left: 12px;
    text-align: center;
    font-weight: normal;
}
.panel-title svg {
    width: 16px;
    height: 16px;
}
.tree {
    flex: 10;
    margin: 0 0 4px;
    padding: 0;
    border: 1px solid #b8b8b8;
    background-color: #fff;
    font-size: 15px;
}
.tree ul {
    margin: 0;
    padding-left: 20px;
}
.tree li {
    list-style: none;
}
.row {
    display: flex;
    align-items: center;
    height: 24px;
}
.exp {
    width: 8px;
    height: 8px;
    margin: 0 6px;
}
.item {
    display: flex;
    align-items: center;
    height: 24px;
}
.item svg {
    width: 16px;
    height: 16px;
    margin: 0 3px;
}
.item svg:last-of-type {
    margin-right: 6px;
}
.bold {
    font-weight: bold;
    color: #000;
}
.hidden {
    color: #bdbdbd;
}
.selected {
    padding-right: 20px;
    background-color: #4393f7;
    color: #06102c;
}
.properties {
    flex: 11;
    padding: 2px;
    border: 1px solid #bdbdbd;
    background-color: #f6f6f6;
}
.property-list {
    height: 100%;
    border: 1px solid #b0b0b0;
    background-color: #fff;
}

/* 3D view */
.workspace {
    display: flex;
    flex-direction: column;
    flex: 1;
    min-width: 0;
}
.view3d {
    position: relative;
    flex: 1;
    min-height: 0;
    border-bottom: 1px solid #fff;
    background: linear-gradient(#363163, #9793ab);
}
.model {
    width: 100%;
    height: 100%;
}
.navcube {
    position: absolute;
    top: 0;
    right: 0;
    width: 140px;
    height: 140px;
}
.axes {
    position: absolute;
    right: 0;
    bottom: 14px;
    width: 80px;
    height: 80px;
}
.doc-tabs {
    display: flex;
    align-items: flex-start;
    height: 32px;
    border-top: 1px solid #cfcbe0;
}
.doc-tab {
    display: flex;
    align-items: center;
    height: 27px;
    padding: 0 14px 0 12px;
    border: 1px solid #bdbdbd;
    border-width: 0 1px 1px 0;
    border-radius: 0 0 3px 3px;
    background-color: #dfdfdf;
}
.doc-tab.active {
    height: 29px;
    background-color: #f5f5f5;
}
.doc-tab svg {
    width: 16px;
    height: 16px;
}
.doc-tab a {
    margin: 0 6px 0 4px;
}

/* Status bar */
.statusbar {
    display: flex;
    align-items: center;
    justify-content: flex-end;
    height: 30px;
    padding-right: 5px;
}
.caret {
    width: 6px;
    height: 6px;
}
.note {
    width: 15px;
    height: 15px;
}
.mouse {
    width: 11px;
    height: 15px;
}
.notify span {
    width: 48px;
    margin-left: 4px;
    text-align: left;
}
.navstyle {
    margin: 0 15px 0 26px;
}
.navstyle span {
    margin: 0 12px 0 5px;
}
.units span {
    margin-right: 6px;
}

/* Launcher */
.dock {
    display: flex;
    align-items: center;
    height: 42px;
    padding: 0 4px;
    background: linear-gradient(90deg, #21111b, #2b171d 60%, #35181b);
}
.dock a {
    position: relative;
    display: flex;
    align-items: center;
    justify-content: center;
    width: 40px;
    height: 36px;
}
.dock svg {
    width: 24px;
    height: 24px;
}
.dock .apps {
    margin-left: auto;
}
.dock-sep {
    width: 1px;
    height: 24px;
    margin: 0 1px;
    background-color: #45333d;
}
.dock .focused {
    width: 36px;
    margin: 0 2px;
    border-radius: 10px;
    background-color: #4b3f47;
}
.run::after, .run2::after {
    content: "";
    position: absolute;
    bottom: 0;
    width: 3px;
    height: 3px;
    border-radius: 50%;
    background-color: #b8462c;
}
.run2::after {
    width: 8px;
    border-radius: 0;
    background: linear-gradient(90deg, #a04545 3px, transparent 3px 5px, #a04545 5px);
}
```
